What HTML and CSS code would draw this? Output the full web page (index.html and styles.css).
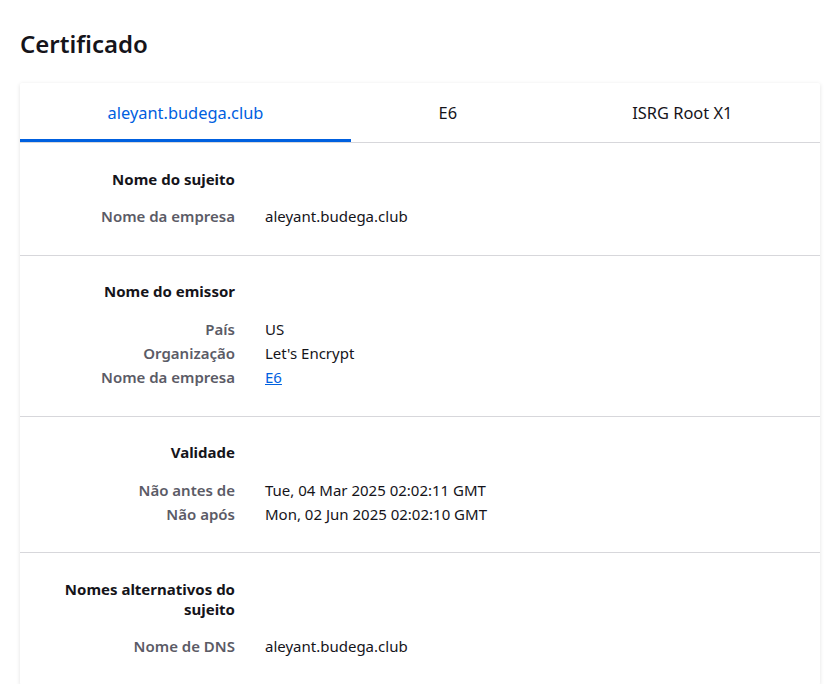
FILE: index.html
```html
<!DOCTYPE html>
<html lang="pt">
<head>
<meta charset="utf-8">
<title>Certificado</title>
<link rel="stylesheet" href="styles.css">
</head>
<body>
<h1 class="page-title">Certificado</h1>
<div class="card">
  <div class="tabs">
    <div class="tab active">aleyant.budega.club</div>
    <div class="tab">E6</div>
    <div class="tab">ISRG Root X1</div>
  </div>
  <section class="group">
    <div class="g-title">Nome do sujeito</div>
    <div class="g-rows">
      <div class="label">Nome da empresa</div><div class="value">aleyant.budega.club</div>
    </div>
  </section>
  <section class="group">
    <div class="g-title">Nome do emissor</div>
    <div class="g-rows">
      <div class="label">País</div><div class="value">US</div>
      <div class="label">Organização</div><div class="value">Let's Encrypt</div>
      <div class="label">Nome da empresa</div><div class="value"><a class="link" href="#">E6</a></div>
    </div>
  </section>
  <section class="group">
    <div class="g-title">Validade</div>
    <div class="g-rows">
      <div class="label">Não antes de</div><div class="value">Tue, 04 Mar 2025 02:02:11 GMT</div>
      <div class="label">Não após</div><div class="value">Mon, 02 Jun 2025 02:02:10 GMT</div>
    </div>
  </section>
  <section class="group">
    <div class="g-title">Nomes alternativos do sujeito</div>
    <div class="g-rows">
      <div class="label">Nome de DNS</div><div class="value">aleyant.budega.club</div>
    </div>
  </section>
</div>
</body>
</html>
```
FILE: styles.css
```css
html, body {
  margin: 0;
  padding: 0;
  background: #ffffff;
}
body {
  font-family: "Noto Sans", "Open Sans", sans-serif;
  color: #15141a;
  padding: 0 12px 0 20px;
}
.page-title {
  margin: 0;
  padding-top: 28px;
  font-size: 24px;
  line-height: 32px;
  font-weight: 600;
  height: 55px;
}
.card {
  background: #fff;
  box-shadow: 0 1px 4px rgba(12, 12, 13, 0.12);
  border-radius: 2px;
}
.tabs {
  display: flex;
  border-bottom: 1px solid #d7d7db;
}
.tab {
  flex: 1 1 auto;
  text-align: center;
  font-size: 16.4px;
  height: 59px;
  line-height: 60px;
  box-sizing: border-box;
  color: #15141a;
}
.tab.active {
  color: #0060df;
  box-shadow: inset 0 -3px 0 #0060df;
}
.group {
  border-bottom: 1px solid #d7d7db;
  padding: 25.5px 0 26.8px;
}
.group:last-child {
  border-bottom: none;
}
.g-title, .label {
  width: 215px;
  text-align: right;
}
.g-title {
  font-size: 15px;
  font-weight: 700;
  line-height: 20px;
  margin-bottom: 15.5px;
}
.g-rows {
  display: grid;
  grid-template-columns: 215px 1fr;
  column-gap: 30px;
  font-size: 15px;
  line-height: 24px;
}
.label {
  color: #5b5b66;
  font-weight: 600;
}
.value {
  color: #15141a;
}
.link {
  color: #0060df;
  text-decoration: underline;
}
```
